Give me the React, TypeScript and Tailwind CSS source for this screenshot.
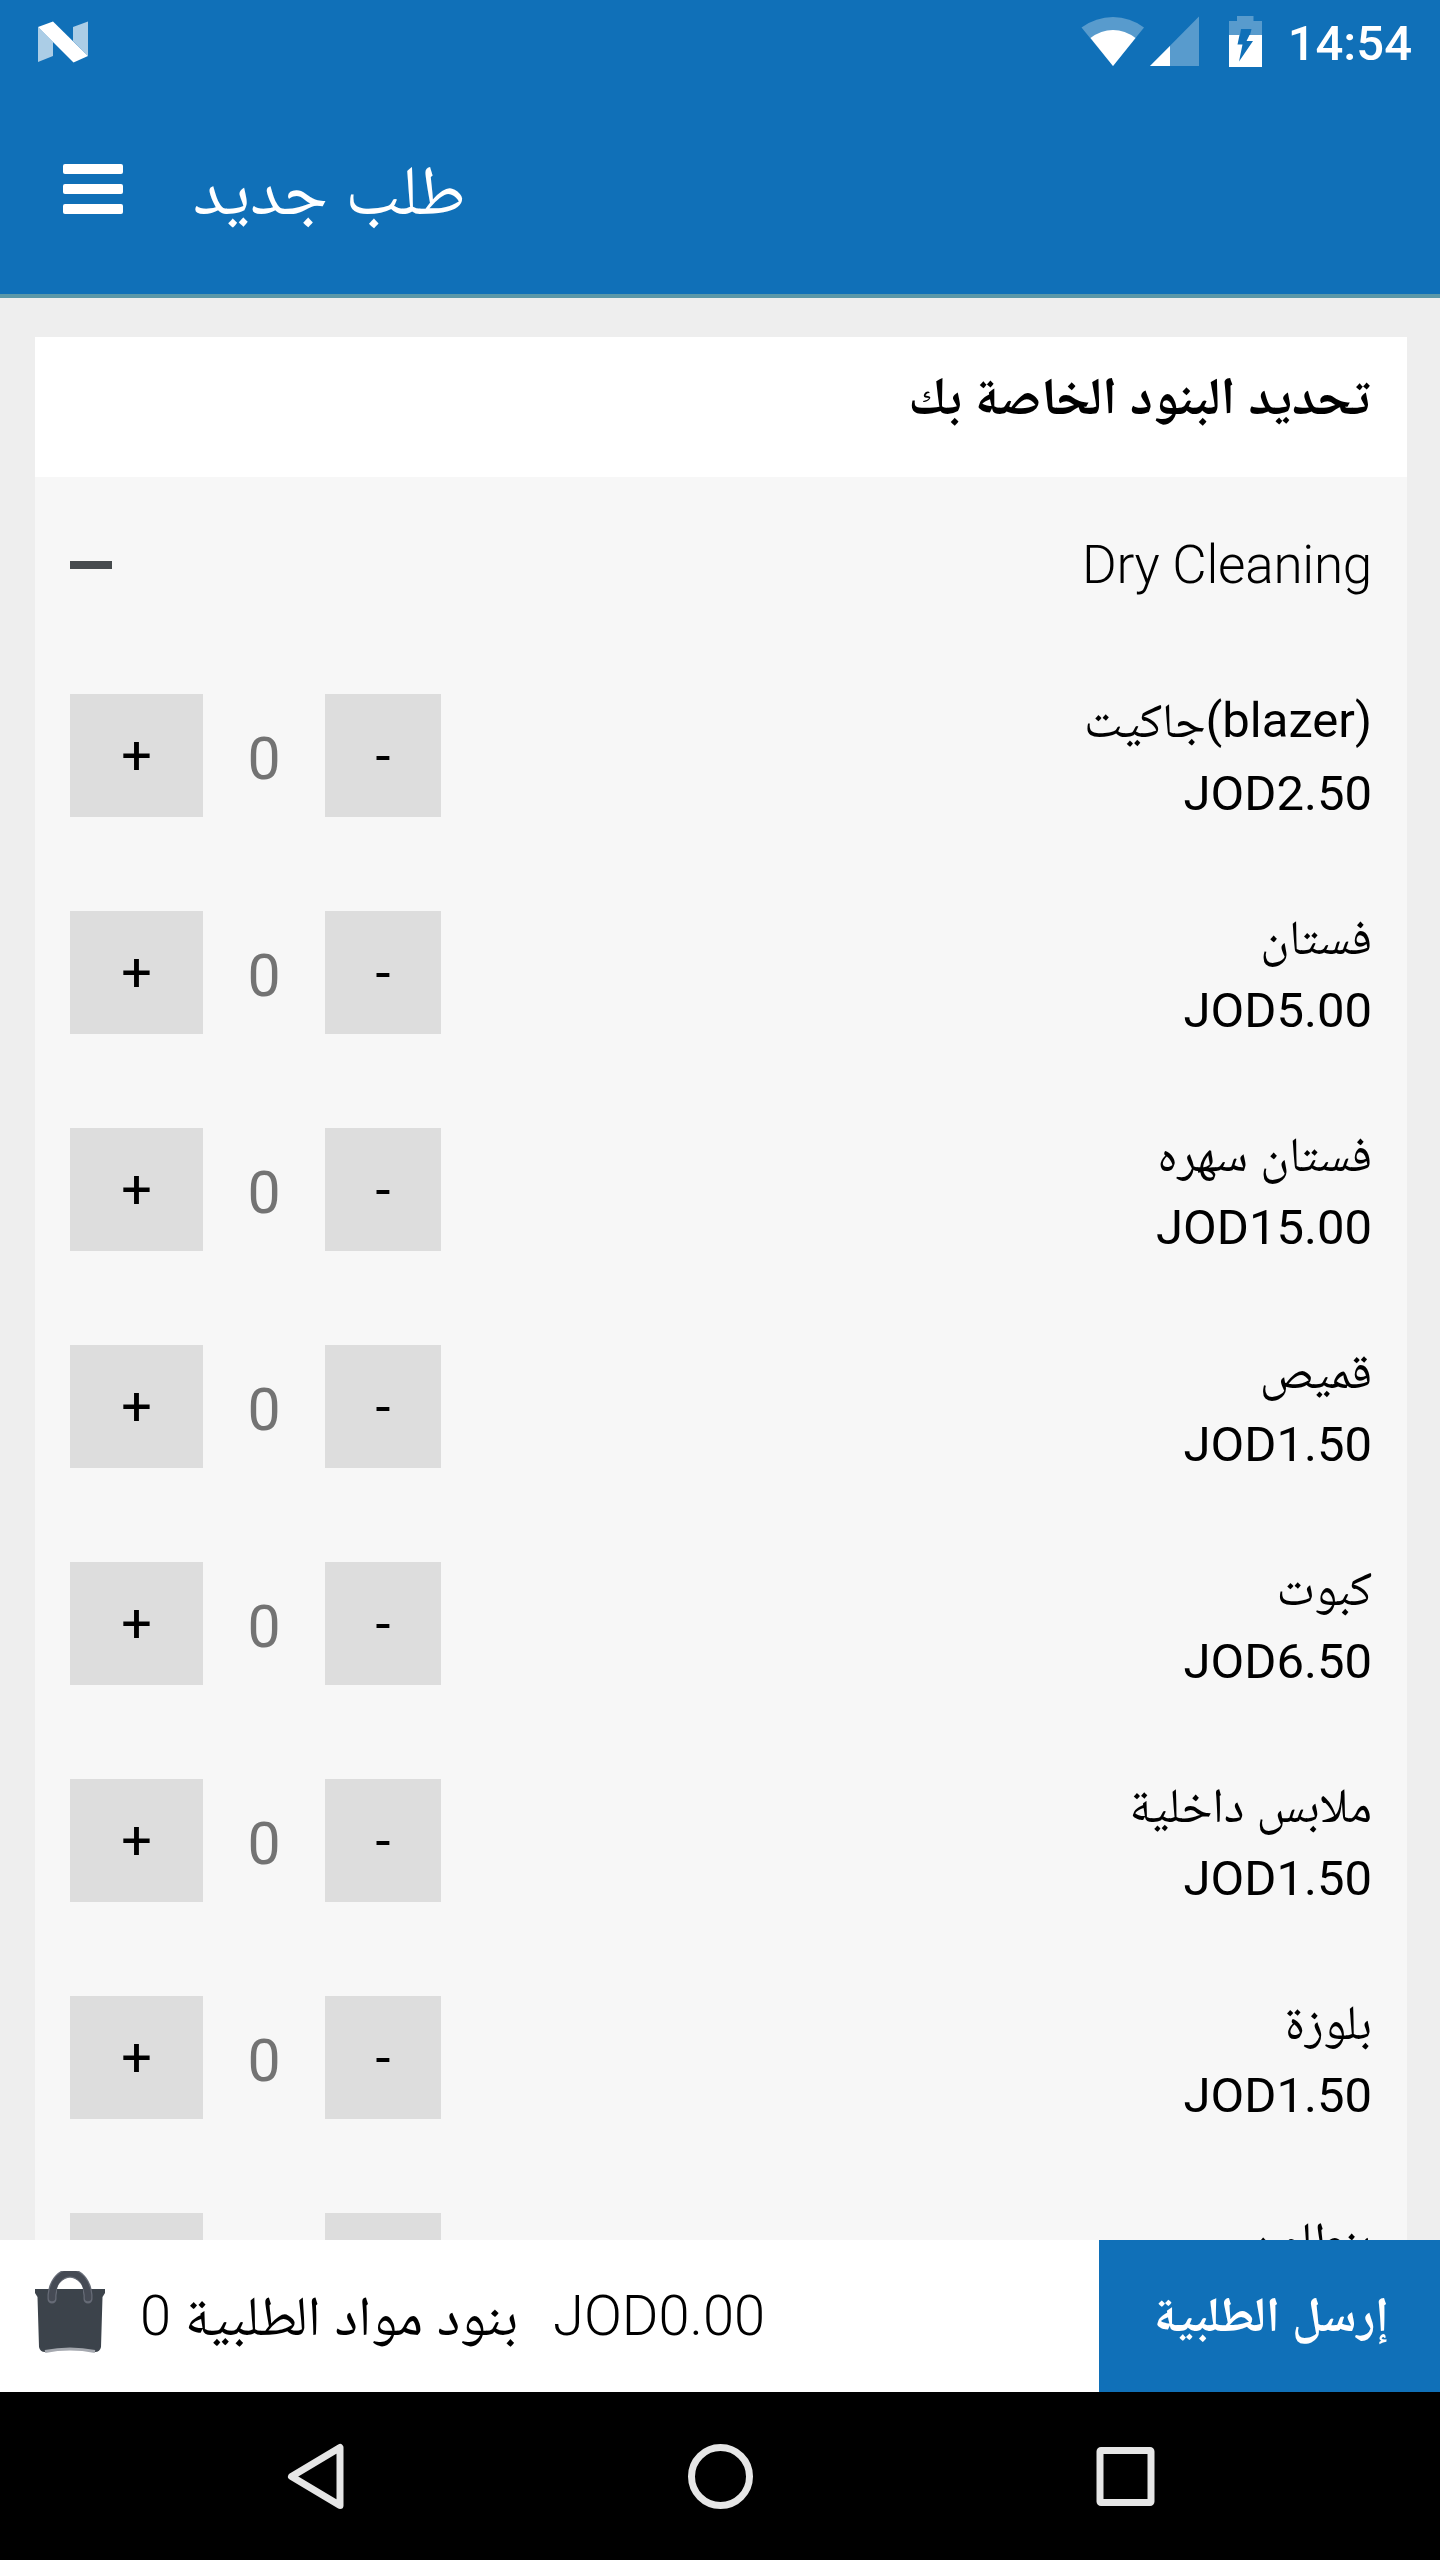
import { useState } from "react";

const ITEMS = [
  { id: 1, name: "(blazer)جاكيت", price: "2.50" },
  { id: 2, name: "فستان", price: "5.00" },
  { id: 3, name: "فستان سهره", price: "15.00" },
  { id: 4, name: "قميص", price: "1.50" },
  { id: 5, name: "كبوت", price: "6.50" },
  { id: 6, name: "ملابس داخلية", price: "1.50" },
  { id: 7, name: "بلوزة", price: "1.50" },
  { id: 8, name: "بنطلون", price: "3.00" },
];

function StatusBar() {
  return (
    <div className="flex h-[88px] justify-between pl-[38px] pr-[28px]">
      <svg className="mt-[21px] h-[42px] w-[50px]" viewBox="0 0 50 42">
        <path d="M0 6 15 21V35L0 41Z" fill="#fff" fillOpacity=".65" />
        <path d="M50 35 35 20V6L50 .5Z" fill="#fff" fillOpacity=".65" />
        <path d="M0 6 15 .5 50 35 35.500 41.500Z" fill="#fff" />
      </svg>
      <div className="flex">
        <svg className="mt-[16px] h-[52px] w-[181px]" viewBox="1081 16 181 52">
          <path d="M1113 66 1081.500 27.500Q1096 17 1113 17T1144 27.500Z" fill="#fff" fillOpacity=".3" />
          <path d="M1113 66 1090.500 38Q1101 30 1113 30T1135.500 38Z" fill="#fff" />
          <path d="M1150 66 1199 16.500V66Z" fill="#fff" fillOpacity=".3" />
          <path d="M1150 66 1170 46V66Z" fill="#fff" />
          <path d="M1229 35V21H1237V16H1253.500V21H1262V35H1250L1251.500 29H1241L1240 35Z" fill="#fff" fillOpacity=".3" />
          <path d="M1229 35H1239.500L1237.500 44.500H1242.500L1239 61.500L1253 41H1246.500L1249.500 35H1262V67H1229Z" fill="#fff" />
        </svg>
        <span className="ml-[26px] mt-[7px] whitespace-nowrap text-[49px] font-medium leading-[74px] text-white">14:54</span>
      </div>
    </div>
  );
}

function Stepper() {
  const [count, setCount] = useState(0);
  return (
    <div className="flex h-[123px] pt-[47px] text-[54px]">
      <button onClick={() => setCount(count + 1)} className="h-[122.500px] w-[133px] shrink-0 bg-[#ddd]">
        +
      </button>
      <span className="h-[123px] w-[122px] shrink-0 pt-[3px] text-center text-[59px] leading-[123px] text-[#737373]">{count}</span>
      <button onClick={() => setCount(Math.max(0, count - 1))} className="h-[122.500px] w-[116px] shrink-0 bg-[#ddd]">
        -
      </button>
    </div>
  );
}

function BagIcon() {
  return (
    <svg className="h-[82px] w-[70px]" viewBox="0 0 70 82">
      <path d="M0 18H70V22L67.500 26 66 76Q65 81 60 81Q35 75 10 81Q5 81 4 76L2.500 26 0 22Z" fill="#3c434b" />
      <path d="M17 28V24C20-5 50-5 53 24V28" fill="none" stroke="#666b76" strokeWidth="9" strokeLinecap="round" />
      <path d="M22 18C25 4 45 4 48 18Z" fill="#fff" />
      <path d="M22 18H48V28H22Z" fill="#3c434b" />
      <path d="M17 27V24C20-5 50-5 53 24V27" fill="none" stroke="#464b55" strokeWidth="6.500" strokeLinecap="round" />
      <path d="M10 80.500Q35 75.500 60 80.500" fill="none" stroke="#a5a8af" strokeWidth="3" />
    </svg>
  );
}

export default function App() {
  return (
    <div className="flex h-[2560px] w-[1440px] flex-col overflow-hidden bg-[#eee] font-['Roboto','Noto_Naskh_Arabic','Noto_Sans_Arabic',serif] text-black">
      <header className="h-[298px] shrink-0 border-b-4 border-[#5b98a8] bg-[#1070b8]">
        <StatusBar />
        <div className="flex pl-[63px] pt-[76px]">
          <div className="flex w-[60px] flex-col gap-[10px]">
            <span className="h-[10px] rounded-[2px] bg-white" />
            <span className="h-[10px] rounded-[2px] bg-white" />
            <span className="h-[10px] rounded-[2px] bg-white" />
          </div>
          <h1 dir="rtl" className="-mt-[11px] ml-[70px] whitespace-nowrap text-[70px] leading-[74px] text-white">طلب جديد</h1>
        </div>
      </header>

      <main className="min-h-0 flex-1 overflow-hidden pl-[35px] pr-[33px] pt-[39px]">
        <h2 dir="rtl" className="h-[140px] bg-white pr-[37px] pt-[22px] text-[52.500px] font-bold leading-[74px]">
          تحديد البنود الخاصة بك
        </h2>
        <div className="bg-[#f7f7f7] px-[35px]">
          <div className="flex h-[170px] items-center justify-between">
            <span className="mt-[6px] h-[8px] w-[42px] bg-[#464a4d]" />
            <span className="mt-[7px] text-[53px] font-light tracking-[-0.25px]">Dry Cleaning</span>
          </div>
          {ITEMS.map((item) => (
            <div key={item.id} className="flex h-[217px] justify-between">
              <Stepper />
              <div className="pt-[37px] text-right text-[49px] leading-[73px]">
                <div dir="rtl">{item.name}</div>
                <div>JOD{item.price}</div>
              </div>
            </div>
          ))}
        </div>
      </main>

      <footer className="flex h-[152px] shrink-0 bg-white">
        <div className="flex flex-1 items-start pl-[35px] pt-[31px]">
          <BagIcon />
          <div className="ml-[35px] flex text-[56px] font-light leading-[90px]">
            <span>0</span>
            <span dir="rtl" className="ml-[10px] w-[337px] whitespace-nowrap font-normal">بنود مواد الطلبية</span>
            <span className="ml-[35px]">JOD0.00</span>
          </div>
        </div>
        <button dir="rtl" className="w-[341px] bg-[#1070b8] pb-[2px] pl-[12px] pr-[8px] text-[49px] font-bold text-white">إرسل الطلبية</button>
      </footer>

      <nav className="h-[168px] shrink-0 bg-black">
        <svg className="h-[168px] w-[1440px]" viewBox="0 0 1440 168" fill="none" stroke="#e6e6e6" strokeWidth="7" strokeLinejoin="round">
          <path d="M291.500 84.500 340 55.500V113.500Z" />
          <circle cx="720.500" cy="84.500" r="29" />
          <rect x="1100" y="58.500" width="51" height="52" rx="1" />
        </svg>
      </nav>
    </div>
  );
}
